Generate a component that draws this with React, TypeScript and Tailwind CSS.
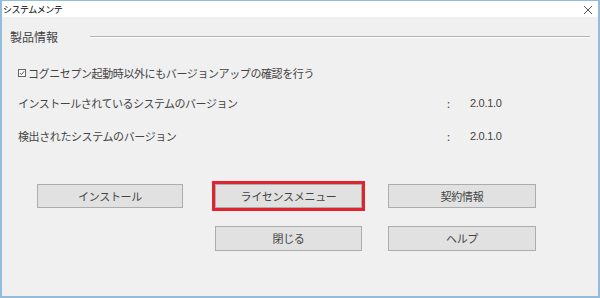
import React from "react";

const jp = { fontFamily: '"Noto Sans CJK JP", "Noto Sans", sans-serif' };

const Btn = ({ label, w, h = 24 }: { label: string; w: number; h?: number }) => (
  <button
    className="flex items-center justify-center bg-[#e1e1e1] border border-[#adadad] text-[11px] text-[#444] tracking-[-0.3px]"
    style={{ width: w, height: h }}
  >
    {label}
  </button>
);

const App = () => {
  return (
    <div
      className="w-[600px] h-[298px] flex flex-col border-t border-x-2 border-b-2 border-[#93bbdc] bg-[#f0f0f0] overflow-hidden"
      style={jp}
    >
      {/* Title bar */}
      <div className="h-[16px] bg-white flex items-center justify-between pl-[1px] pr-[5px] shrink-0">
        <span className="text-[9px] text-black tracking-[-0.5px] leading-none">システムメンテ</span>
        <svg width="10" height="10" viewBox="0 0 10 10" className="mt-[1px]">
          <path d="M1 1 L9 9 M9 1 L1 9" stroke="#555" strokeWidth="1" />
        </svg>
      </div>

      {/* Body */}
      <div className="flex flex-col">
        {/* Section header */}
        <div className="flex items-center h-[16px] mt-[12px] pl-[8px] pr-[8px]">
          <span className="text-[12px] text-[#444] leading-none">製品情報</span>
          <div className="ml-[32px] flex-1 flex flex-col">
            <div className="h-px bg-[#b4b4b4]" />
            <div className="h-px bg-white" />
          </div>
        </div>

        {/* Checkbox row */}
        <div className="flex items-center h-[16px] mt-[20px] pl-[16px] text-[11px] text-[#444] tracking-[-0.4px]">
          <span className="w-[8px] h-[8px] border border-[#666] bg-white flex items-center justify-center mr-[2px]">
            <svg width="6" height="6" viewBox="0 0 6 6">
              <path d="M0.8 3 L2.4 4.6 L5.2 1.2" stroke="#444" strokeWidth="0.9" fill="none" />
            </svg>
          </span>
          <span>コグニセプン起動時以外にもバージョンアップの確認を行う</span>
        </div>

        {/* Version rows */}
        <div className="flex items-center h-[16px] mt-[14px] pl-[16px] text-[11px] text-[#444]">
          <span className="w-[429px] tracking-[-0.5px]">インストールされているシステムのバージョン</span>
          <span className="w-[23px]">:</span>
          <span className="tracking-[-0.3px]" style={{ fontFamily: '"Liberation Sans", sans-serif' }}>2.0.1.0</span>
        </div>
        <div className="flex items-center h-[16px] mt-[17px] pl-[16px] text-[11px] text-[#444]">
          <span className="w-[429px] tracking-[-0.4px]">検出されたシステムのバージョン</span>
          <span className="w-[23px]">:</span>
          <span className="tracking-[-0.3px]" style={{ fontFamily: '"Liberation Sans", sans-serif' }}>2.0.1.0</span>
        </div>

        {/* Buttons row 1 */}
        <div className="flex items-center h-[30px] mt-[37px] pl-[35px]">
          <Btn label="インストール" w={146} />
          <div className="ml-[29px] border-[3px] border-[#e0232f] p-0">
            <Btn label="ライセンスメニュー" w={147} />
          </div>
          <div className="ml-[23px]">
            <Btn label="契約情報" w={148} />
          </div>
        </div>

        {/* Buttons row 2 */}
        <div className="flex items-center mt-[15px] pl-[213px]">
          <Btn label="閉じる" w={147} h={25} />
          <div className="ml-[26px]">
            <Btn label="ヘルプ" w={148} h={25} />
          </div>
        </div>
      </div>
    </div>
  );
};

export default App;
